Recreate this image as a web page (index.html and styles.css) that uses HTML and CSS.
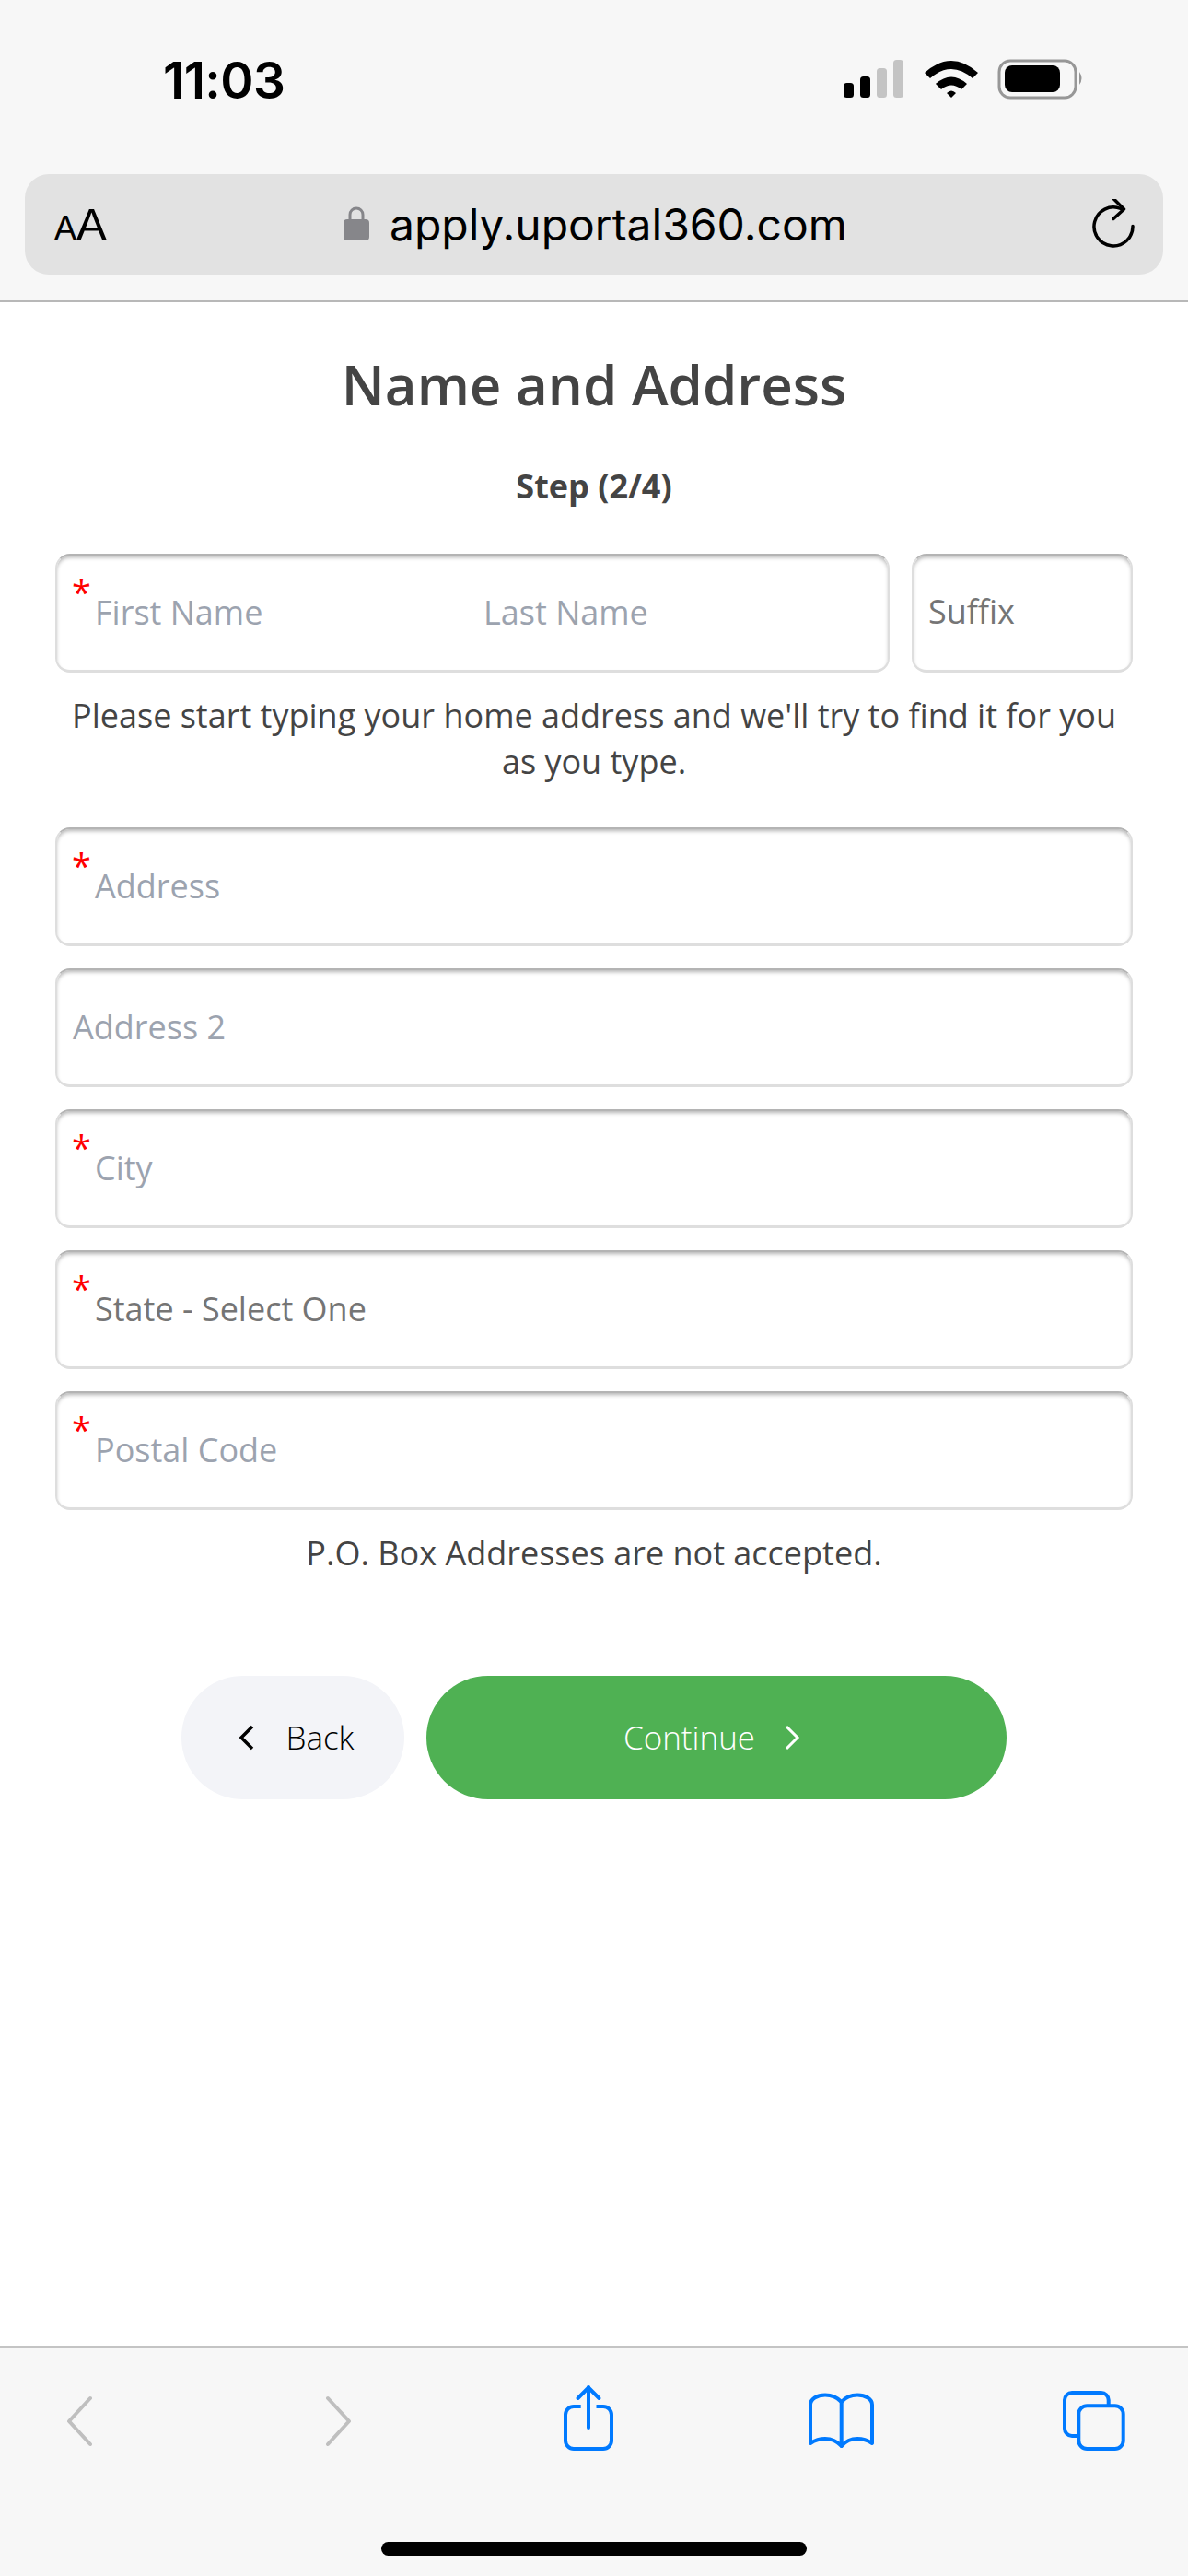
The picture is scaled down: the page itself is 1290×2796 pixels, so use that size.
FILE: index.html
```html
<!DOCTYPE html>
<html lang="en">
<head>
    <meta charset="UTF-8">
    <meta name="viewport" content="width=device-width, initial-scale=1.0">
    <title>Name and Address</title>
    <link rel="stylesheet" href="styles.css">
</head>
<body>
    <div class="screen">
        <header class="browser-top">
            <div class="status-bar">
                <span class="clock">11:03</span>
                <svg class="status-icons" width="262" height="44" viewBox="0 0 262 44">
                    <rect x="1" y="26" width="11" height="16" rx="3.5" fill="#000"/>
                    <rect x="19" y="19" width="11" height="23" rx="3.5" fill="#000"/>
                    <rect x="37" y="10" width="11" height="32" rx="3.5" fill="#c4c4c4"/>
                    <rect x="55" y="1" width="11" height="41" rx="3.5" fill="#c4c4c4"/>
                    <path d="M89 15 Q118 -11 147 15 L141 21 Q118 1 95 21 Z" fill="#000"/>
                    <path d="M101 27 Q118 12 135 27 L129 33 Q118 24 107 33 Z" fill="#000"/>
                    <path d="M113 37 Q118 32 123 37 L118 42 Z" fill="#000"/>
                    <rect x="170" y="2" width="83" height="40" rx="12" fill="none" stroke="#979797" stroke-width="3"/>
                    <rect x="176" y="7" width="60" height="29" rx="8" fill="#000"/>
                    <path d="M257 14 Q262 21 257 28 Z" fill="#979797"/>
                </svg>
            </div>
            <div class="url-bar">
                <span class="text-size"><small>A</small>A</span>
                <span class="url">
                    <svg class="lock" width="28" height="38" viewBox="0 0 28 38">
                        <path d="M7 17 V10 a7 7 0 0 1 14 0 V17" fill="none" stroke="#86868a" stroke-width="3"/>
                        <rect x="0" y="15" width="28" height="23" rx="4" fill="#86868a"/>
                    </svg>
                    apply.uportal360.com
                </span>
                <svg class="reload" width="52" height="56" viewBox="24 15.5 52 56">
                    <g fill="none" stroke="#000" stroke-width="3.5" stroke-linecap="round" stroke-linejoin="round">
                        <path d="M56 26 A21 21 0 1 0 69 45"/>
                        <path d="M48 15 L59.5 26.5 L48 37"/>
                    </g>
                </svg>
            </div>
        </header>

        <main class="content">
            <h1>Name and Address</h1>
            <h2>Step (2/4)</h2>

            <div class="name-row">
                <div class="field field-name">
                    <span class="req">*</span>
                    <span class="ph ph-first">First Name</span>
                    <span class="ph">Last Name</span>
                </div>
                <div class="field field-suffix"><span class="ph-dark">Suffix</span></div>
            </div>

            <p class="hint">Please start typing your home address and we'll try to find it for you as you type.</p>

            <div class="fields">
                <div class="field"><span class="req">*</span><span class="ph">Address</span></div>
                <div class="field"><span class="ph ph-plain">Address 2</span></div>
                <div class="field"><span class="req">*</span><span class="ph">City</span></div>
                <div class="field"><span class="req">*</span><span class="ph-dark">State - Select One</span></div>
                <div class="field"><span class="req">*</span><span class="ph">Postal Code</span></div>
            </div>

            <p class="note">P.O. Box Addresses are not accepted.</p>

            <div class="buttons">
                <button class="btn btn-back">
                    <svg width="20" height="30" viewBox="0 0 20 30"><path d="M16 3 L4 15 L16 27" fill="none" stroke="#000" stroke-width="3.5"/></svg>
                    Back
                </button>
                <button class="btn btn-continue">
                    Continue
                    <svg width="20" height="30" viewBox="0 0 20 30"><path d="M4 3 L16 15 L4 27" fill="none" stroke="#fff" stroke-width="3"/></svg>
                </button>
            </div>
        </main>

        <footer class="browser-bottom">
            <div class="toolbar">
                <svg class="tb-back" width="28" height="90" viewBox="0 0 28 90"><path d="M26 23 L3 48 L26 73" fill="none" stroke="#bfbfbf" stroke-width="4" stroke-linecap="round" stroke-linejoin="round"/></svg>
                <svg class="tb-forward" width="28" height="90" viewBox="0 0 28 90"><path d="M2 23 L25 48 L2 73" fill="none" stroke="#bfbfbf" stroke-width="4" stroke-linecap="round" stroke-linejoin="round"/></svg>
                <svg class="tb-share" width="100" height="90" viewBox="0 0 100 90">
                    <g fill="none" stroke="#007aff" stroke-width="4" stroke-linecap="round" stroke-linejoin="round">
                        <path stroke-linecap="butt" d="M40.7 32 H33 a9 9 0 0 0 -9 9 V69 a9 9 0 0 0 9 9 H65 a9 9 0 0 0 9 -9 V41 a9 9 0 0 0 -9 -9 H57.5"/>
                        <path d="M49 55 V11"/>
                        <path d="M37.5 23 L49 11.5 L60.5 23"/>
                    </g>
                </svg>
                <svg class="tb-book" width="100" height="90" viewBox="0 0 100 90">
                    <g fill="none" stroke="#007aff" stroke-width="4" stroke-linecap="round" stroke-linejoin="round">
                        <path d="M48.7 27 C43 21 36 19.5 31 19.5 C22 19.5 15 24 15 30 V72 C21 68 26 67 31 67 C38 67 44 70 48.7 75 C53 70 60 67 66 67 C71 67 76 68 82 72 V30 C82 24 75 19.5 66 19.5 C61 19.5 54 21 48.7 27 Z"/>
                        <path d="M48.7 27 V75"/>
                    </g>
                </svg>
                <svg class="tb-tabs" width="100" height="90" viewBox="0 0 100 90">
                    <g fill="none" stroke="#007aff" stroke-width="4" stroke-linejoin="round">
                        <path d="M31 64 H24 a8 8 0 0 1 -8 -8 V25 a8 8 0 0 1 8 -8 H55.7 a8 8 0 0 1 8 8 V31"/>
                        <rect x="31.3" y="31.3" width="48.4" height="46.7" rx="9"/>
                    </g>
                </svg>
            </div>
            <div class="home-bar"></div>
        </footer>
    </div>
</body>
</html>
```

FILE: styles.css
```css
* {
    box-sizing: border-box;
}
body {
    margin: 0;
    background-color: white;
    font-family: "Open Sans", Arial, sans-serif;
}
.screen {
    width: 1290px;
    height: 2796px;
    display: flex;
    flex-direction: column;
    overflow: hidden;
}

/* safari top */
.browser-top {
    height: 328px;
    background-color: #f7f7f7;
    border-bottom: 2px solid #b8b8b8;
    font-family: Inter, Roboto, sans-serif;
    color: black;
}
.status-bar {
    height: 189px;
    padding: 64px 113px 0 177px;
    display: flex;
    justify-content: space-between;
    align-items: flex-start;
}
.clock {
    font-size: 55px;
    font-weight: 600;
    line-height: 46px;
    letter-spacing: -0.6px;
}
.url-bar {
    height: 109px;
    margin: 0 27px;
    padding: 0 26px 0 32px;
    background-color: #e2e2e2;
    border-radius: 26px;
    display: flex;
    align-items: center;
    justify-content: space-between;
}
.text-size {
    font-family: "Liberation Sans", Arial, sans-serif;
    font-size: 49px;
    line-height: 1;
}
.text-size small {
    font-size: 36px;
}
.url {
    margin-right: 8px;
    font-size: 48px;
    display: flex;
    align-items: center;
    gap: 22px;
}
.lock {
    margin-top: -4px;
}

/* form */
.content {
    flex: 1;
    padding: 0 60px;
    color: #444;
}
h1 {
    margin: 54px 0 0;
    font-size: 60px;
    font-weight: 600;
    line-height: 70px;
    text-align: center;
    color: #444;
}
h2 {
    margin: 51px 0 0;
    font-size: 36px;
    font-weight: 700;
    line-height: 50px;
    text-align: center;
    color: #444;
}
.name-row {
    margin-top: 48px;
    display: flex;
    gap: 24px;
}
.field {
    position: relative;
    height: 129px;
    padding: 0 0 2px 41px;
    display: flex;
    align-items: center;
    font-size: 36px;
    background-color: white;
    border: 2px solid #dedede;
    border-top-color: #b4b4b4;
    border-bottom-width: 3px;
    border-radius: 16px;
    box-shadow: inset 0 3px 4px -1px rgba(0, 0, 0, 0.3);
}
.field-name {
    flex: 1;
}
.field-suffix {
    width: 240px;
    padding: 0 0 4px 16px;
}
.ph {
    color: #9ca3af;
}
.ph-first {
    width: 422px;
}
.ph-plain {
    margin-left: -24px;
}
.ph-dark {
    color: #757575;
}
.req {
    position: absolute;
    left: 16px;
    top: 18px;
    color: red;
    font-size: 38px;
    line-height: 42px;
}
.hint {
    margin: 22px 0 0;
    font-size: 36px;
    line-height: 50px;
    text-align: center;
}
.fields {
    margin-top: 46px;
    display: flex;
    flex-direction: column;
    gap: 24px;
}
.note {
    margin: 22px 0 0;
    font-size: 36px;
    line-height: 50px;
    text-align: center;
}
.buttons {
    margin-top: 108px;
    padding-left: 137px;
    display: flex;
    gap: 24px;
}
.btn {
    height: 134px;
    padding-bottom: 2px;
    border: none;
    border-radius: 67px;
    font-family: "Open Sans", Arial, sans-serif;
    font-size: 35px;
    font-weight: 300;
    display: flex;
    align-items: center;
    justify-content: center;
}
.btn-back {
    width: 242px;
    padding-left: 13px;
    gap: 32px;
    background-color: #f3f4f8;
    color: black;
}
.btn-continue {
    width: 630px;
    padding-right: 15px;
    gap: 30px;
    background-color: #4fb153;
    color: white;
}

/* safari bottom */
.browser-bottom {
    height: 250px;
    background-color: #f7f7f7;
    border-top: 2px solid #c4c4c4;
}
.toolbar {
    height: 211px;
    padding-top: 32px;
    display: flex;
    align-items: flex-start;
}
.tb-back {
    margin-left: 72px;
}
.tb-forward {
    margin-left: 254px;
}
.tb-share {
    margin-left: 208px;
}
.tb-book {
    margin-left: 175px;
}
.tb-tabs {
    margin-left: 175px;
}
.home-bar {
    width: 462px;
    height: 15px;
    margin: 0 auto;
    background-color: black;
    border-radius: 8px;
}
```
